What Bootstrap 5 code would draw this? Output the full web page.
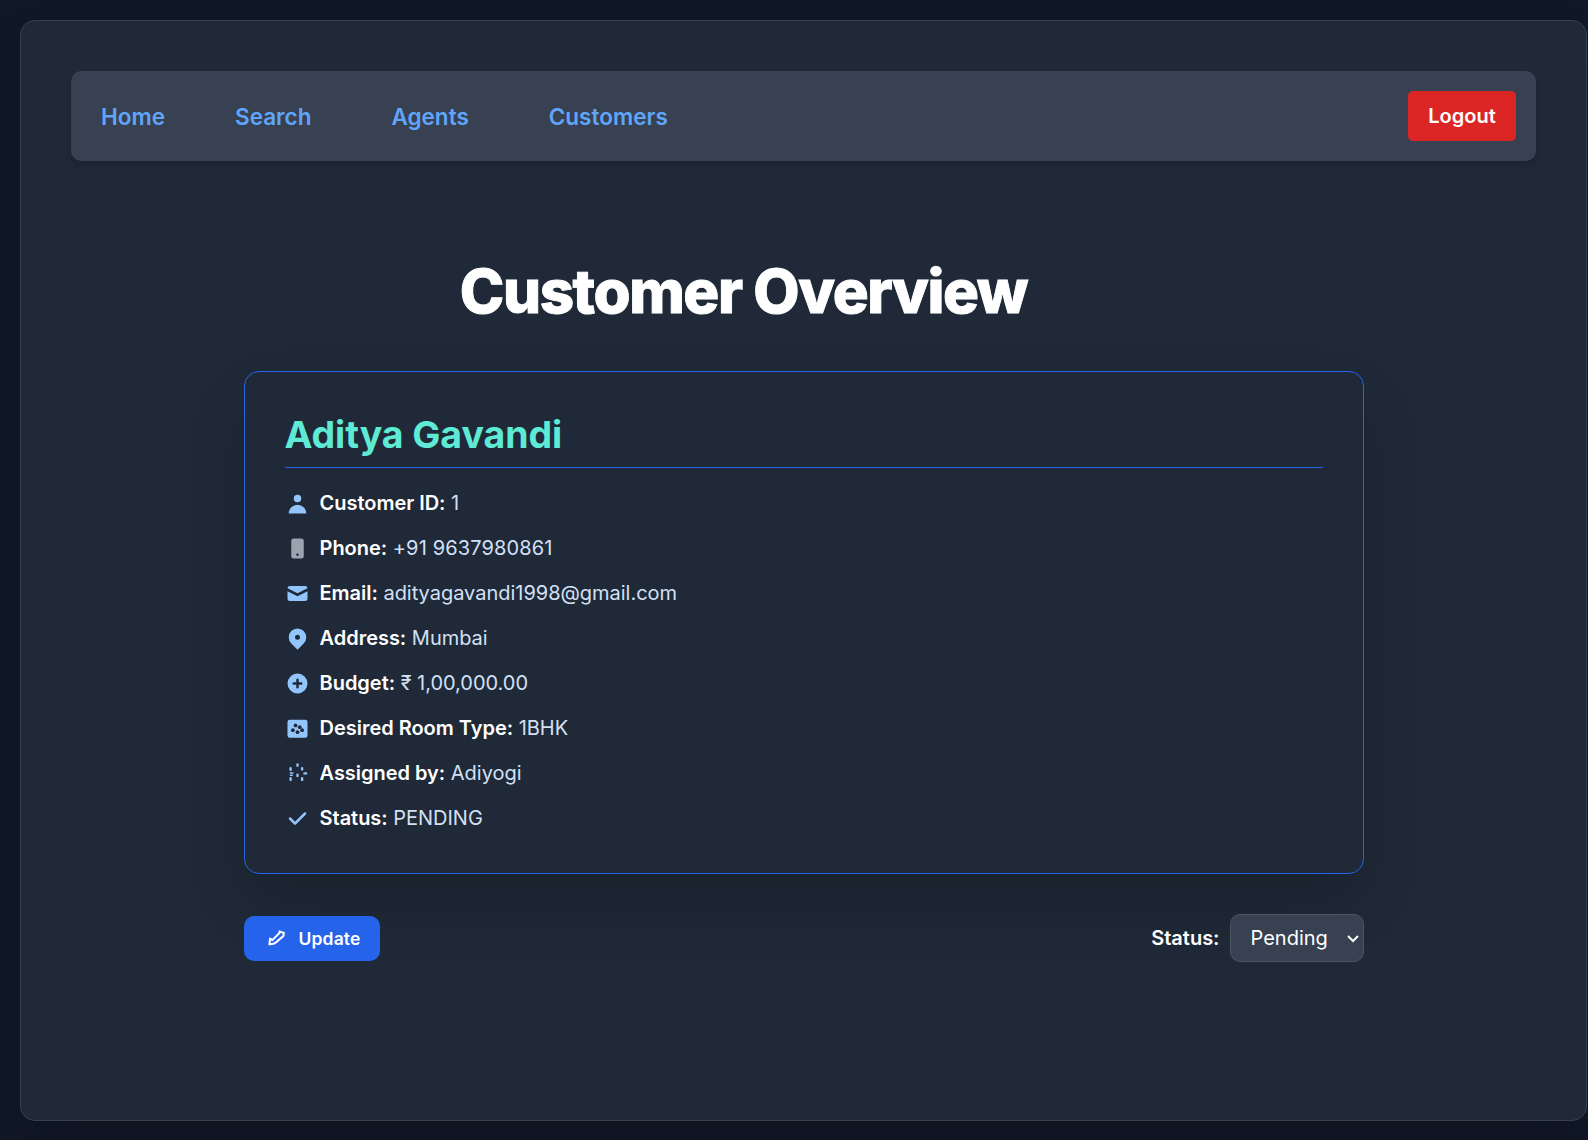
<!DOCTYPE html>
<html lang="en">
<head>
<meta charset="utf-8">
<title>Customer Overview</title>
<meta name="viewport" content="width=device-width, initial-scale=1">
<link href="https://cdn.jsdelivr.net/npm/bootstrap@5.3.0/dist/css/bootstrap.min.css" rel="stylesheet">
<style>
html{font-size:20px}
body{font-family:Inter,"Noto Sans",sans-serif;font-size:20px;line-height:30px;background:#111827;color:#fff;overflow:hidden}
.page-wrap{padding:20px 1px 0 20px;height:1140px}
.panel{background:#1f2937;border:1px solid #374151;border-radius:15px;padding:50px;height:1101px;box-shadow:0 31px 62px -15px rgba(0,0,0,.25)}
.topbar{background:#374151;border-radius:10px;padding:20px 20px 20px 30px;height:90px;box-shadow:0 5px 7.5px -1.25px rgba(0,0,0,.1),0 2.5px 5px -2.5px rgba(0,0,0,.1)}
.topbar a{color:#60a5fa;font-weight:600;font-size:22.5px;line-height:35px;text-decoration:none}
.nav-links{gap:80px}
.nav-links a:first-child{margin-right:-10px}
.btn-logout,.btn-logout:hover{background:#dc2626;color:#fff;font-weight:600;font-size:20px;line-height:30px;padding:10px 0;width:108px;border:0;border-radius:5px}
.overview{width:1120px}
.title{font-size:60px;line-height:60px;font-weight:800;letter-spacing:-1.45px;-webkit-text-stroke:.9px #fff;margin:100px 120px 50px 0}
.info{border:1px solid #2563eb;border-radius:15px;padding:40px;height:503px;background:#1f2937;box-shadow:0 31px 62px -15px rgba(0,0,0,.25)}
.who{font-size:37.5px;line-height:45px;font-weight:700;color:#5eead4;border-bottom:1px solid #2563eb;padding-bottom:10px;margin-bottom:20px;letter-spacing:-.08px}
.facts{color:#d3e0f6;gap:15px;letter-spacing:-.02px}
.facts li{height:30px;gap:10px}
.facts strong{font-weight:600;color:#fff}
.facts svg{width:25px;height:25px;fill:#93c5fd;flex:none}
.facts svg.dim{fill:#9ca3af}
.facts .digits{letter-spacing:.12px}
.btn-update,.btn-update:hover{background:#2563eb;color:#fff;border:0;border-radius:10px;height:45px;width:136px;font-size:17.5px;line-height:25px;font-weight:600;letter-spacing:.15px;padding:0 0 0 20px;gap:10px}
.actions{margin-top:40px}
.state-label{font-weight:600}
.state-pick{background:#374151;border:1px solid #4b5563;border-radius:10px;color:#fff;height:48px;width:134px;padding:0 4px 0 20px}
.state-pick svg{margin-top:2px}
</style>
</head>
<body>
<div class="page-wrap">
<main class="panel">
<nav class="topbar d-flex align-items-center justify-content-between">
<div class="nav-links d-flex"><a href="#">Home</a><a href="#">Search</a><a href="#">Agents</a><a href="#">Customers</a></div>
<button class="btn btn-logout">Logout</button>
</nav>
<section class="overview mx-auto">
<h1 class="title text-center">Customer Overview</h1>
<div class="info">
<h2 class="who">Aditya Gavandi</h2>
<ul class="facts list-unstyled d-flex flex-column mb-0">
<li class="d-flex align-items-center"><svg viewBox="0 0 20 20"><path d="M10 9a3 3 0 100-6 3 3 0 000 6zm-7 9a7 7 0 1114 0H3z"/></svg><span><strong>Customer ID:</strong> 1</span></li>
<li class="d-flex align-items-center"><svg class="dim" viewBox="0 0 20 20"><path fill-rule="evenodd" d="M7 2a2 2 0 00-2 2v12a2 2 0 002 2h6a2 2 0 002-2V4a2 2 0 00-2-2H7zm3 14a1 1 0 100-2 1 1 0 000 2z"/></svg><span><strong>Phone:</strong> <span class="digits">+91 9637980861</span></span></li>
<li class="d-flex align-items-center"><svg viewBox="0 0 20 20"><path d="M2.003 5.884L10 9.882l7.997-3.998A2 2 0 0016 4H4a2 2 0 00-1.997 1.884z"/><path d="M18 8.118l-8 4-8-4V14a2 2 0 002 2h12a2 2 0 002-2V8.118z"/></svg><span><strong>Email:</strong> adityagavandi1998@gmail.com</span></li>
<li class="d-flex align-items-center"><svg viewBox="0 0 20 20"><path fill-rule="evenodd" d="M5.05 4.05a7 7 0 119.9 9.9L10 18.9l-4.95-4.95a7 7 0 010-9.9zM10 11a2 2 0 100-4 2 2 0 000 4z"/></svg><span><strong>Address:</strong> Mumbai</span></li>
<li class="d-flex align-items-center"><svg viewBox="0 0 20 20"><path fill-rule="evenodd" d="M10 18a8 8 0 100-16 8 8 0 000 16zm1-11a1 1 0 10-2 0v2H7a1 1 0 100 2h2v2a1 1 0 102 0v-2h2a1 1 0 100-2h-2V7z"/></svg><span><strong>Budget:</strong> ₹ 1,00,000.00</span></li>
<li class="d-flex align-items-center"><svg viewBox="0 0 20 20"><rect x="2" y="3" width="16" height="14.4" rx="1.8"/><g fill="#1f2937"><circle cx="8.4" cy="7.5" r="1.5"/><circle cx="11.8" cy="8.9" r="1.5"/><circle cx="6.3" cy="11.3" r="1.5"/><circle cx="13.7" cy="11.3" r="1.5"/><circle cx="10" cy="12.9" r="1.5"/></g></svg><span><strong>Desired Room Type:</strong> 1BHK</span></li>
<li class="d-flex align-items-center"><svg viewBox="0 0 20 20"><g stroke="#93c5fd" stroke-width="1.9" stroke-linecap="round" fill="none"><path d="M10 2.7v1M4.5 5.7v1.3M13.7 5.7v1M15.5 9.9h1.4M10 11v1M4.5 13.7v1.4M13.7 13.7v1.4"/><path stroke-width="1.2" d="M4.3 9.5h2M5.8 11.3h-1.5"/></g></svg><span><strong>Assigned by:</strong> Adiyogi</span></li>
<li class="d-flex align-items-center"><svg viewBox="0 0 20 20"><path fill-rule="evenodd" d="M16.707 5.293a1 1 0 010 1.414l-8 8a1 1 0 01-1.414 0l-4-4a1 1 0 011.414-1.414L8 12.586l7.293-7.293a1 1 0 011.414 0z"/></svg><span><strong>Status:</strong> PENDING</span></li>
</ul>
</div>
<div class="actions d-flex align-items-center justify-content-between">
<button class="btn btn-update d-flex align-items-center"><svg width="25" height="25" viewBox="0 0 20 20" fill="none" stroke="#fff" stroke-width="1.6" stroke-linejoin="round" stroke-linecap="round"><path d="M4.3 14.7L4.9 10 6.7 11.3 12.3 5.6 12.5 4.3 13.7 4.9 15.9 5.4 15.5 8 9.6 13.1 7.6 14.2z"/></svg><span>Update</span></button>
<div class="d-flex align-items-center"><span class="state-label">Status:</span><div class="state-pick d-flex align-items-center justify-content-between ms-2"><span>Pending</span><svg width="12" height="8" viewBox="0 0 12 8" fill="none" stroke="#fff" stroke-width="2"><path d="M1 1l5 5 5-5"/></svg></div></div>
</div>
</section>
</main>
</div>
<script src="https://cdn.jsdelivr.net/npm/bootstrap@5.3.0/dist/js/bootstrap.bundle.min.js"></script>
</body>
</html>
